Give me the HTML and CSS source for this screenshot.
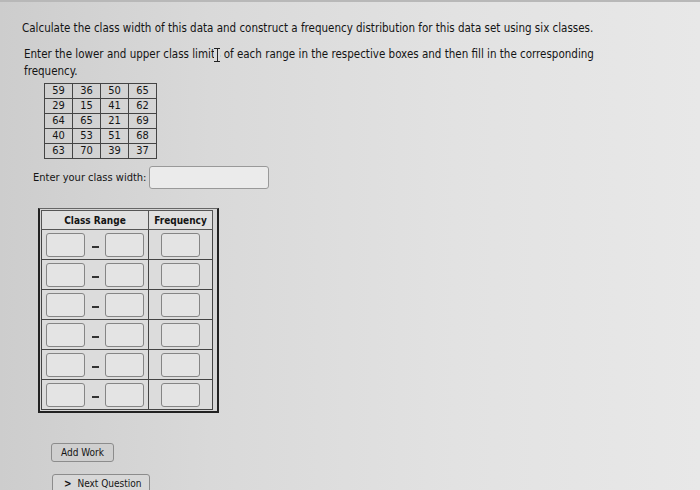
FILE: index.html
```html
<!DOCTYPE html>
<html>
<head>
<meta charset="utf-8">
<link rel="stylesheet" href="styles.css">
</head>
<body>
<div class="page">
  <p class="q1">Calculate the class width of this data and construct a frequency distribution for this data set using six classes.</p>
  <p class="q2">Enter the lower and upper class limits of each range in the respective boxes and then fill in the corresponding frequency.</p>
  <span class="ibeam"></span>
  <table class="data">
    <tr><td>59</td><td>36</td><td>50</td><td>65</td></tr>
    <tr><td>29</td><td>15</td><td>41</td><td>62</td></tr>
    <tr><td>64</td><td>65</td><td>21</td><td>69</td></tr>
    <tr><td>40</td><td>53</td><td>51</td><td>68</td></tr>
    <tr><td>63</td><td>70</td><td>39</td><td>37</td></tr>
  </table>
  <div class="width-row">
    <span class="width-label">Enter your class width:</span>
    <span class="box width-box"></span>
  </div>
  <div class="freq-wrap">
    <table class="freq">
      <tr><th class="range-h">Class Range</th><th class="freq-h">Frequency</th></tr>
      <tr><td class="range-cell"><div class="range"><span class="box in"></span><span class="dash"></span><span class="box in"></span></div></td><td class="fcell"><span class="box in"></span></td></tr>
      <tr><td class="range-cell"><div class="range"><span class="box in"></span><span class="dash"></span><span class="box in"></span></div></td><td class="fcell"><span class="box in"></span></td></tr>
      <tr><td class="range-cell"><div class="range"><span class="box in"></span><span class="dash"></span><span class="box in"></span></div></td><td class="fcell"><span class="box in"></span></td></tr>
      <tr><td class="range-cell"><div class="range"><span class="box in"></span><span class="dash"></span><span class="box in"></span></div></td><td class="fcell"><span class="box in"></span></td></tr>
      <tr><td class="range-cell"><div class="range"><span class="box in"></span><span class="dash"></span><span class="box in"></span></div></td><td class="fcell"><span class="box in"></span></td></tr>
      <tr><td class="range-cell"><div class="range"><span class="box in"></span><span class="dash"></span><span class="box in"></span></div></td><td class="fcell"><span class="box in"></span></td></tr>
    </table>
  </div>
  <div class="btn add">Add Work</div>
  <div class="btn next"><span class="chev">&gt;</span> Next Question</div>
</div>
</body>
</html>
```
FILE: styles.css
```css
html, body {
  margin: 0;
  padding: 0;
}
body {
  width: 700px;
  height: 490px;
  overflow: hidden;
  background: linear-gradient(90deg, #cdcdcd 0%, #d9d9d9 30%, #e2e2e2 65%, #e8e8e8 100%);
  font-family: "DejaVu Sans Condensed", "DejaVu Sans", sans-serif;
  color: #141414;
  border-top: 2px solid #b8b8b8;
  box-sizing: border-box;
}
.page {
  padding: 19px 0 0 22px;
  position: relative;
}
.q1 {
  margin: 0;
  font-size: 11.5px;
  line-height: 14px;
}
.q2 {
  margin: 11px 0 0 2px;
  font-size: 11.5px;
  line-height: 17px;
  width: 590px;
}
.ibeam {
  position: absolute;
  left: 214px;
  top: 46px;
  width: 6px;
  height: 14px;
  border-top: 1px solid #222;
  border-bottom: 1px solid #222;
  background: linear-gradient(90deg, #dcdcdc 2.5px, #222 2.5px, #222 3.5px, #dcdcdc 3.5px);
  box-sizing: border-box;
}
.data {
  border-collapse: collapse;
  margin: 3px 0 0 22px;
  font-size: 11px;
  border: 1.5px solid #333;
}
.data td {
  border: 1px solid #444;
  width: 27px;
  height: 14px;
  padding: 0;
  text-align: center;
  line-height: 14px;
}
.width-row {
  display: flex;
  align-items: center;
  gap: 3px;
  margin: 7px 0 0 11px;
}
.width-label {
  font-size: 11px;
}
.box {
  display: inline-block;
  border: 1px solid #858585;
  border-radius: 3px;
  background: #e4e4e4;
  box-sizing: border-box;
}
.width-box {
  width: 120px;
  height: 23px;
  background: #ebebeb;
  border-color: #999;
}
.freq-wrap {
  margin: 19px 0 0 16px;
  width: 181px;
  border: 2px solid #222;
  border-top: 1px solid #666;
  box-sizing: border-box;
  padding: 1px 4px 1px 1px;
  background: #d6d6d6;
}
.freq {
  border-collapse: collapse;
  width: 100%;
}
.freq th {
  font-size: 10px;
  font-weight: bold;
  height: 18px;
  padding: 0;
  background: #e0e0e0;
  border: 1px solid #555;
}
.range-h {
  width: 106px;
}
.freq td {
  border: 1px solid #444;
  height: 29px;
  padding: 0;
  background: #dcdcdc;
}
.range {
  display: flex;
  align-items: center;
  justify-content: space-between;
  padding: 0 4px;
}
.fcell {
  text-align: center;
}
.fcell .box {
  vertical-align: middle;
}
.in {
  width: 39px;
  height: 24px;
  flex: none;
}
.dash {
  flex: none;
  display: block;
  width: 7px;
  height: 2px;
  background: #333;
  margin-top: 4px;
}
.btn {
  display: block;
  box-sizing: border-box;
  border: 1px solid #8c8c8c;
  border-radius: 3px;
  background: #cfcfcf;
  font-size: 10px;
  height: 19px;
  line-height: 17px;
}
.add {
  margin: 30px 0 0 29px;
  width: 63px;
  padding-left: 9px;
}
.next {
  margin: 12px 0 0 30px;
  width: 98px;
  padding-left: 11px;
  background: #d8d8d8;
}
.chev {
  font-weight: bold;
  margin-right: 3px;
}
```
